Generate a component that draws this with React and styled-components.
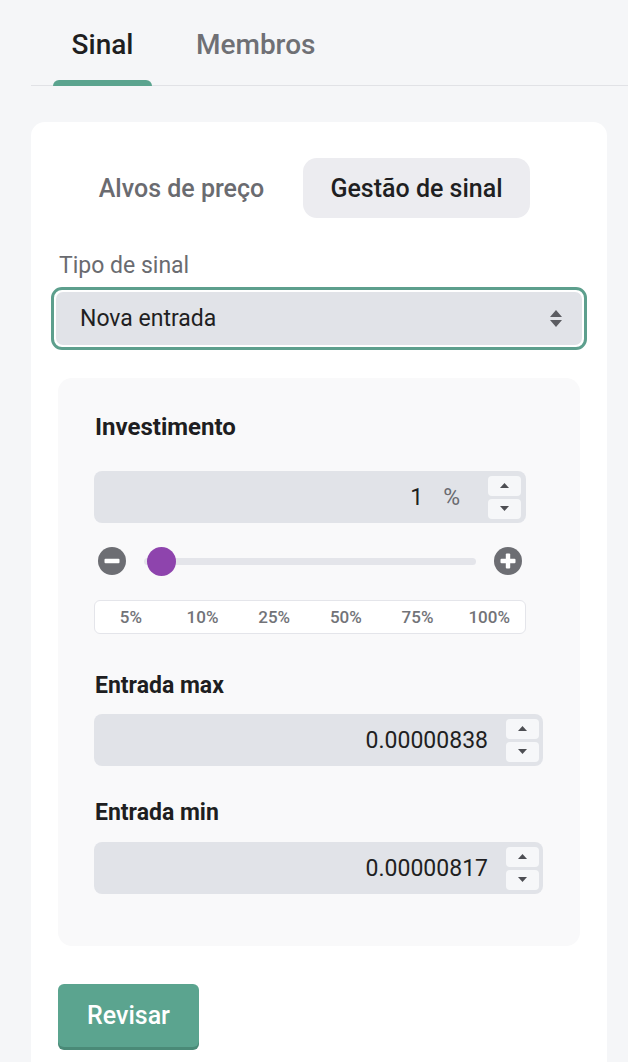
import React from 'react';
import styled, { createGlobalStyle } from 'styled-components';

const GlobalStyle = createGlobalStyle`
  html, body {
    margin: 0;
    padding: 0;
    background: #f5f6f8;
    font-family: Roboto, "Liberation Sans", Arial, sans-serif;
    color: #1f1f22;
  }
  * { box-sizing: border-box; }
`;

const Page = styled.div`
  width: 628px;
  height: 1062px;
  overflow: hidden;
  background: #f5f6f8;
`;

// Top tabs
const TabBar = styled.nav`
  display: flex;
  align-items: flex-end;
  margin-left: 31px;
  height: 86px;
  border-bottom: 1px solid #e1e2e6;
  padding-left: 22px;
  gap: 44px;
`;

const Tab = styled.div`
  position: relative;
  width: ${p => (p.$active ? '99px' : 'auto')};
  text-align: ${p => (p.$active ? 'center' : 'left')};
  padding-bottom: 24px;
  font-size: 28px;
  font-weight: 500;
  line-height: 32px;
  color: ${p => (p.$active ? '#1e1e21' : '#6f7075')};

  &::after {
    content: '';
    display: ${p => (p.$active ? 'block' : 'none')};
    position: absolute;
    left: 0;
    right: 0;
    bottom: -1px;
    height: 6px;
    border-radius: 6px 6px 0 0;
    background: #5ba48f;
  }
`;

const Card = styled.section`
  margin: 36px 0 0 31px;
  width: 576px;
  min-height: 960px;
  background: #fff;
  border-radius: 14px;
  padding: 36px 20px 0;
`;

const Segmented = styled.div`
  display: flex;
  gap: 8px;
  margin-left: 17px;
`;

const Segment = styled.div`
  width: 227px;
  height: 60px;
  display: flex;
  align-items: center;
  justify-content: center;
  border-radius: 14px;
  font-size: 25px;
  font-weight: 500;
  background: ${p => (p.$active ? '#ececf0' : 'transparent')};
  color: ${p => (p.$active ? '#1f1f22' : '#6a6b70')};
`;

const FieldLabel = styled.div`
  margin: 36px 0 0 8px;
  font-size: 23px;
  line-height: 24px;
  color: #6a6b70;
`;

const SelectBox = styled.div`
  margin-top: 9px;
  height: 63px;
  border: 3px solid #5d9f8d;
  border-radius: 11px;
  padding: 2px;
  background: #fff;
`;

const SelectInner = styled.div`
  height: 100%;
  background: #e1e3e8;
  border-radius: 7px;
  display: flex;
  align-items: center;
  justify-content: space-between;
  padding: 0 20px 0 24px;
  font-size: 23px;
  color: #1f1f22;
`;

const Panel = styled.div`
  margin: 28px 7px 0;
  height: 568px;
  background: #f9f9fa;
  border-radius: 14px;
  padding: 36px 37px 0 36px;
  display: flex;
  flex-direction: column;
`;

const SectionTitle = styled.h3`
  margin: ${p => p.$top || 0}px 0 0 1px;
  font-size: ${p => p.$size || 23}px;
  line-height: 26px;
  font-weight: 700;
  color: #1e1e21;
`;

const NumberField = styled.div`
  margin-top: ${p => p.$top || 0}px;
  width: ${p => (p.$narrow ? '432px' : '100%')};
  height: 52px;
  background: #e1e3e8;
  border-radius: 8px;
  display: flex;
  align-items: center;
  justify-content: flex-end;
  padding-right: ${p => (p.$narrow ? 5 : 4)}px;
`;

const Value = styled.span`
  font-size: 23px;
  color: #1f1f22;
  margin-right: ${p => p.$gap}px;
`;

const Unit = styled.span`
  font-size: 23px;
  color: #6a6b70;
  margin-right: 28px;
`;

const Spinner = styled.div`
  display: flex;
  flex-direction: column;
  gap: 3px;
`;

const SpinButton = styled.div`
  width: 33px;
  height: 20px;
  border-radius: 4px;
  background: #f6f7f9;
  display: flex;
  align-items: center;
  justify-content: center;
`;

const SliderRow = styled.div`
  margin-top: 23px;
  width: 432px;
  height: 30px;
  display: flex;
  align-items: center;
  gap: 18px;
  padding: 0 4px;
`;

const Track = styled.div`
  position: relative;
  flex: 1;
  height: 7px;
  border-radius: 4px;
  background: #e4e5ea;
`;

const Thumb = styled.div`
  position: absolute;
  top: 50%;
  width: 29px;
  height: 29px;
  margin-top: -14.5px;
  border-radius: 50%;
  background: #8e44ad;
`;

const Presets = styled.div`
  margin-top: 24px;
  width: 432px;
  height: 34px;
  display: grid;
  grid-template-columns: repeat(6, 1fr);
  align-items: center;
  background: #fff;
  border: 1px solid #e4e5ea;
  border-radius: 6px;
`;

const Preset = styled.span`
  text-align: center;
  font-size: 17px;
  font-weight: 500;
  color: #727378;
`;

const ReviewButton = styled.button`
  margin: 38px 0 0 7px;
  width: 141px;
  height: 63px;
  border: none;
  border-radius: 6px;
  background: #5ba48f;
  box-shadow: 0 3px 0 #4a8a77;
  color: #fff;
  font-family: inherit;
  font-size: 25px;
  font-weight: 500;
`;

const Caret = ({ up }) => (
  <svg width="9" height="5" viewBox="0 0 9 5">
    <path d={up ? 'M0 5 L4.5 0 L9 5 Z' : 'M0 0 L4.5 5 L9 0 Z'} fill="#4d4e53" />
  </svg>
);

const Spin = () => (
  <Spinner>
    <SpinButton><Caret up /></SpinButton>
    <SpinButton><Caret /></SpinButton>
  </Spinner>
);

const SortIcon = () => (
  <svg width="12" height="17" viewBox="0 0 12 17">
    <path d="M0 7 L6 0 L12 7 Z M0 10 L6 17 L12 10 Z" fill="#5c5d62" />
  </svg>
);

const RoundIcon = ({ plus }) => (
  <svg width="28" height="28" viewBox="0 0 28 28">
    <circle cx="14" cy="14" r="14" fill="#6d6e73" />
    <rect x="6.5" y="11.8" width="15" height="4.4" rx="1" fill="#fff" />
    {plus && <rect x="11.8" y="6.5" width="4.4" height="15" rx="1" fill="#fff" />}
  </svg>
);

const presets = ['5%', '10%', '25%', '50%', '75%', '100%'];

export default function App() {
  const sliderValue = 1;
  return (
    <Page>
      <GlobalStyle />
      <TabBar>
        <Tab $active>Sinal</Tab>
        <Tab>Membros</Tab>
      </TabBar>

      <Card>
        <Segmented>
          <Segment>Alvos de preço</Segment>
          <Segment $active>Gestão de sinal</Segment>
        </Segmented>

        <FieldLabel>Tipo de sinal</FieldLabel>
        <SelectBox>
          <SelectInner>
            <span>Nova entrada</span>
            <SortIcon />
          </SelectInner>
        </SelectBox>

        <Panel>
          <SectionTitle $size={24}>Investimento</SectionTitle>
          <NumberField $narrow $top={31}>
            <Value $gap={20}>1</Value>
            <Unit>%</Unit>
            <Spin />
          </NumberField>

          <SliderRow>
            <RoundIcon />
            <Track>
              <Thumb style={{ left: `${sliderValue}%` }} />
            </Track>
            <RoundIcon plus />
          </SliderRow>

          <Presets>
            {presets.map(p => <Preset key={p}>{p}</Preset>)}
          </Presets>

          <SectionTitle $top={39}>Entrada max</SectionTitle>
          <NumberField $top={15}>
            <Value $gap={18}>0.00000838</Value>
            <Spin />
          </NumberField>

          <SectionTitle $top={34}>Entrada min</SectionTitle>
          <NumberField $top={16}>
            <Value $gap={18}>0.00000817</Value>
            <Spin />
          </NumberField>
        </Panel>

        <ReviewButton>Revisar</ReviewButton>
      </Card>
    </Page>
  );
}
